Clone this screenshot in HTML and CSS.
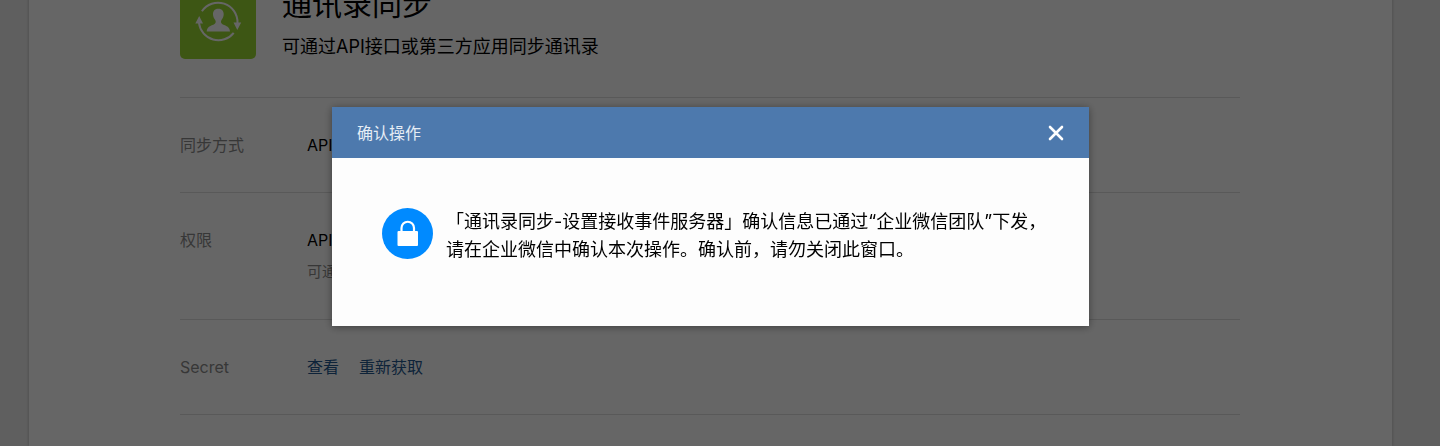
FILE: index.html
```html
<!DOCTYPE html>
<html lang="zh-CN">
<head>
<meta charset="utf-8">
<title>通讯录同步</title>
<link rel="stylesheet" href="styles.css">
</head>
<body>
<main class="page">
  <header class="intro">
    <svg class="intro-icon" viewBox="0 0 76 76" aria-hidden="true">
      <rect width="76" height="76" rx="5" fill="#98d832"/>
      <g fill="none" stroke="#fff" stroke-width="2">
        <path d="M21.900 28.200A19.500 19.500 0 0 1 57.500 40"/>
        <path d="M53.700 49.800A19.500 19.500 0 0 1 19 40"/>
      </g>
      <path fill="#fff" d="M15.300 40.500 19.200 33 23 40.500ZM53.500 39.500H61.200L57.300 47Z"/>
      <path fill="#fff" d="M38.300 25.700c-3.900 0-5.500 2.700-5.300 5.900.1 2.300 1 3.800 2.200 5.500 1 1.500.6 3.500-1.300 4.400-3.700 1.500-7 2.400-7.200 7.100h23.300c-.2-4.700-3.500-5.600-7.200-7.100-1.900-.9-2.300-2.900-1.300-4.400 1.200-1.700 2.100-3.200 2.200-5.500.2-3.200-1.500-5.900-5.400-5.900Z"/>
    </svg>
    <div class="intro-copy">
      <h1 class="intro-title">通讯录同步</h1>
      <p class="intro-text">可通过API接口或第三方应用同步通讯录</p>
    </div>
  </header>
  <dl class="settings">
    <div class="row"><dt class="label">同步方式</dt><dd class="value">API</dd></div>
    <div class="row"><dt class="label">权限</dt><dd class="value">API<p class="hint">可通</p></dd></div>
    <div class="row"><dt class="label">Secret</dt><dd class="value links"><a class="link" href="#view">查看</a><a class="link" href="#reset">重新获取</a></dd></div>
  </dl>
</main>
<div class="overlay">
  <section class="dialog" role="dialog" aria-modal="true" aria-labelledby="dialog-title">
    <header class="dialog-head">
      <h2 class="dialog-title" id="dialog-title">确认操作</h2>
      <button class="close" type="button" aria-label="关闭">
        <svg class="close-icon" viewBox="0 0 16 16" aria-hidden="true"><path d="M2 2 14 14M14 2 2 14" fill="none" stroke="#fff" stroke-width="2.600" stroke-linecap="round"/></svg>
      </button>
    </header>
    <div class="dialog-body">
      <svg class="lock" viewBox="0 0 51 51" aria-hidden="true">
        <circle cx="25.500" cy="25.500" r="25.500" fill="#008aff"/>
        <rect x="15.500" y="23" width="20.500" height="15" rx="1" fill="#fff"/>
        <path d="M19.500 24V20a6.250 6.250 0 0 1 12.500 0V24" fill="none" stroke="#fff" stroke-width="2.200"/>
      </svg>
      <p class="message">「通讯录同步-设置接收事件服务器」确认信息已通过“企业微信团队”下发，<br>请在企业微信中确认本次操作。确认前，请勿关闭此窗口。</p>
    </div>
  </section>
</div>
</body>
</html>
```
FILE: styles.css
```css
* {
  box-sizing: border-box;
}

body {
  margin: 0;
  height: 100vh;
  overflow: hidden;
  padding: 0 48px 0 29px;
  background: #ededed;
  color: #000;
  font: 16px/24px Inter, "Noto Sans CJK SC", sans-serif;
}

h1, h2, p, dl, dd {
  margin: 0;
  font-weight: 400;
}

.page {
  min-height: calc(100vh + 17px);
  margin-top: -17px;
  padding: 0 152px 0 151px;
  background: #fff;
  box-shadow: 0 0 3px rgba(0, 0, 0, 0.25);
}

.intro {
  display: flex;
  gap: 26px;
  padding-bottom: 38px;
  border-bottom: 1px solid #dedede;
}

.intro-icon {
  flex: none;
  width: 76px;
  height: 76px;
}

.intro-title {
  margin-bottom: 10px;
  font-size: 30px;
  line-height: 42px;
}

.intro-text {
  font-size: 18px;
}

.row {
  display: flex;
  padding: 35px 0;
  border-bottom: 1px solid #dedede;
}

.label {
  flex: none;
  width: 127px;
  color: #8b8b8b;
}

.hint {
  margin-top: 8px;
  color: #8b8b8b;
  font-size: 15px;
}

.links {
  display: flex;
  gap: 20px;
}

.link {
  color: #24588f;
  text-decoration: none;
}

.overlay {
  position: fixed;
  inset: 0;
  padding: 107px 19px 0 0;
  background: rgba(0, 0, 0, 0.6);
}

.dialog {
  max-width: 757px;
  margin: 0 auto;
  background: #fdfdfd;
  box-shadow: 0 1px 8px rgba(0, 0, 0, 0.4);
}

.dialog-head {
  display: flex;
  align-items: center;
  justify-content: space-between;
  padding: 14px 25px 13px;
  background: #4d79ad;
  color: #e6edf5;
}

.dialog-title {
  font-size: 16px;
}

.close {
  display: flex;
  padding: 0;
  border: 0;
  background: none;
}

.close-icon {
  width: 16px;
  height: 16px;
}

.dialog-body {
  display: flex;
  gap: 13px;
  padding: 50px 40px 62px 50px;
}

.lock {
  flex: none;
  width: 51px;
  height: 51px;
}

.message {
  font-size: 18px;
  line-height: 28px;
}
```
